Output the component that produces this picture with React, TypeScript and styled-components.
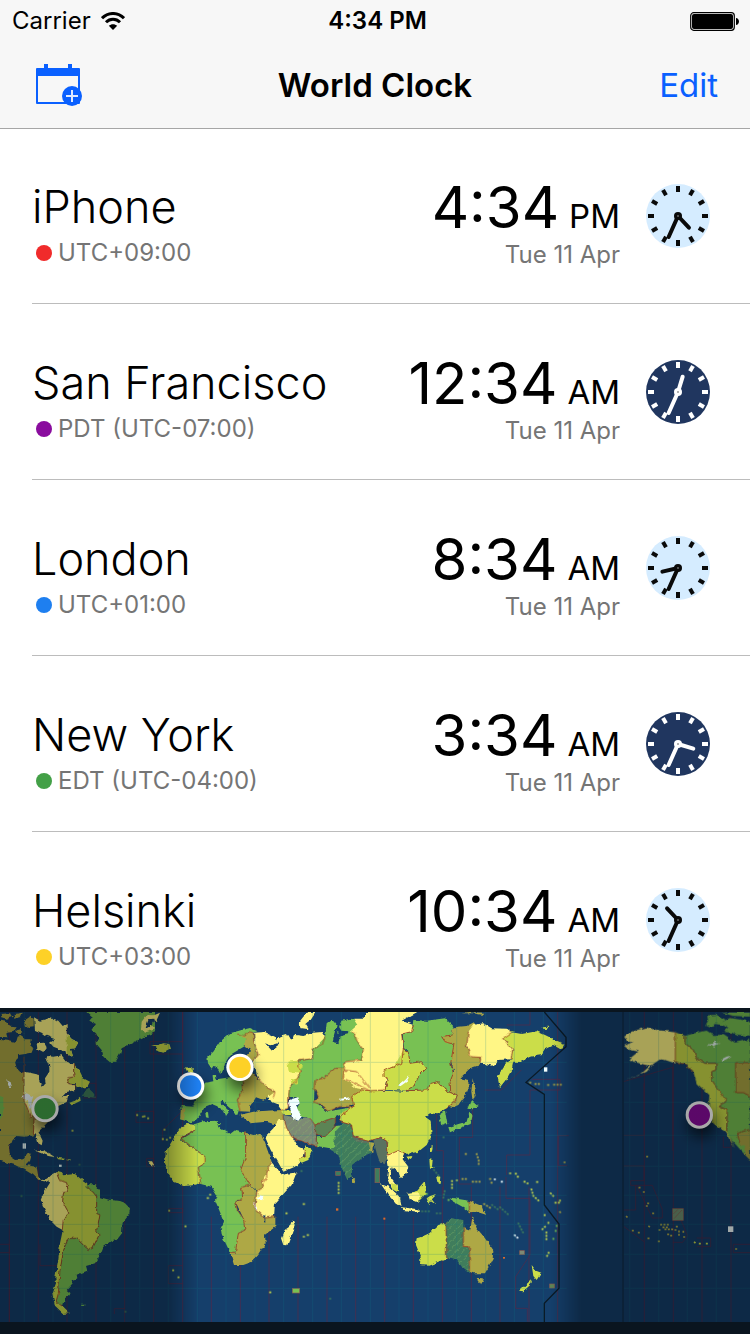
import React from "react";
import styled, { createGlobalStyle } from "styled-components";

const GlobalStyle = createGlobalStyle`
  *, *::before, *::after { box-sizing: border-box; }
  body {
    margin: 0;
    background: #fff;
    color: #000;
    font-family: Inter, "Liberation Sans", sans-serif;
    -webkit-font-smoothing: antialiased;
  }
`;

const Screen = styled.div`
  display: flex;
  flex-direction: column;
`;

const Header = styled.header`
  position: relative;
  background: #f7f7f7;
  box-shadow: 0 1px 0 #a6a6a6;
`;

const StatusBar = styled.div`
  display: grid;
  grid-template-columns: 1fr auto 1fr;
  align-items: center;
  height: 42px;
  padding: 0 11px 0 12px;
  font-size: 24px;
  line-height: 32px;
`;

const Carrier = styled.div`
  display: flex;
  align-items: center;
  gap: 10px;
`;

const StatusTime = styled.div`
  padding-left: 4px;
  font-weight: 600;
`;

const BatterySlot = styled.div`
  display: flex;
  justify-content: flex-end;
`;

const NavBar = styled.div`
  display: grid;
  grid-template-columns: 1fr auto 1fr;
  align-items: center;
  height: 86px;
  padding: 0 32px;
`;

const Title = styled.h1`
  margin: 0;
  font-size: 33px;
  line-height: 40px;
  font-weight: 600;
`;

const NavButton = styled.button<{ $end?: boolean }>`
  justify-self: ${(p) => (p.$end ? "end" : "start")};
  display: flex;
  padding: 0;
  border: 0;
  background: none;
  color: #0a60ff;
  font: inherit;
  font-size: 33px;
  line-height: 40px;
`;

const ClockList = styled.ul`
  margin: 0;
  padding: 0;
  list-style: none;
`;

const ClockRow = styled.li`
  display: flex;
  align-items: center;
  min-height: 176px;
  margin-left: 32px;
  padding-right: 40px;
  border-bottom: 1px solid #bcbcbc;
  &:last-child { border-bottom-color: transparent; }
`;

const Place = styled.div`
  flex: 1;
  padding-top: 14px;
`;

const PlaceName = styled.div`
  font-size: 45px;
  line-height: 60px;
  font-weight: 300;
`;

const Zone = styled.div`
  display: flex;
  align-items: center;
  gap: 6px;
  padding-left: 4px;
  font-size: 24px;
  line-height: 32px;
  color: #757575;
`;

const Dot = styled.span<{ $color: string }>`
  width: 16px;
  height: 16px;
  border-radius: 50%;
  background: ${(p) => p.$color};
`;

const Moment = styled.div`
  padding-top: 18px;
  margin-right: 26px;
  text-align: right;
`;

const Time = styled.div`
  display: flex;
  align-items: baseline;
  justify-content: flex-end;
  gap: 10px;
  font-size: 58px;
  line-height: 60px;
`;

const Period = styled.span`
  font-size: 33px;
  line-height: 36px;
`;

const DateText = styled.div`
  font-size: 24px;
  line-height: 36px;
  color: #757575;
`;

const MapSvg = styled.svg`
  display: block;
  width: 100%;
  height: auto;
`;

function WifiIcon() {
  return (
    <svg width="24" height="18" viewBox="0 0 24 18" fill="none" stroke="#000" strokeWidth="3" aria-hidden="true">
      <path d="M1 6.200C7.200-.1 16.800-.1 23 6.200" />
      <path d="M5 10.200c4-4 10-4 14 0" />
      <path d="M12 18l-4.200-4.200c2.400-2.200 6-2.200 8.400 0z" fill="#000" stroke="none" />
    </svg>
  );
}

function BatteryIcon() {
  return (
    <svg width="49" height="19" viewBox="0 0 49 19" aria-hidden="true">
      <rect x=".7" y=".7" width="43.600" height="17.600" rx="3" fill="none" stroke="#000" strokeWidth="1.200" />
      <rect x="2" y="2" width="41" height="15" rx="2" />
      <path d="M46 6c1.500.2 3 1.500 3 3.500S47.500 12.800 46 13z" />
    </svg>
  );
}

function CalendarAddIcon() {
  return (
    <svg width="54" height="44" viewBox="-4 0 54 44" aria-hidden="true">
      <path d="M8 1h4v4h20V1h4v4h7q1 0 1 1v34q0 1-1 1H1q-1 0-1-1V6q0-1 1-1h7zM2 13v26h40V13z" fill="#0a60ff" fillRule="evenodd" />
      <circle cx="36" cy="33" r="10" fill="#0a60ff" />
      <path d="M36 27v12M30 33h12" stroke="#dfeaff" strokeWidth="2" />
    </svg>
  );
}

function ClockFace({ hour, minute, night }: { hour: number; minute: number; night: boolean }) {
  const ink = night ? "#fff" : "#0a0a0a";
  return (
    <svg width="64" height="64" viewBox="-32 -32 64 64" aria-hidden="true">
      <circle r="32" fill={night ? "#20365f" : "#d5ecff"} />
      {Array.from({ length: 12 }, (_, i) => (
        <rect key={i} x="-2" y="-30" width="4" height="6" fill={ink} transform={`rotate(${i * 30})`} />
      ))}
      <g stroke={ink} strokeWidth="4" strokeLinecap="round">
        <path d="M0 0V-16" transform={`rotate(${hour * 30 + minute / 2})`} />
        <path d="M0 0V-23" transform={`rotate(${minute * 6})`} />
      </g>
      <circle r="4" fill={ink} />
      <circle r="1" fill={night ? "#999" : "#666"} />
    </svg>
  );
}

const C = {
  sea: "#153f6b",
  yellow: "#fff685",
  lime: "#cbdd4a",
  green: "#78c152",
  olive: "#aea845",
  teal: "#3f7d5c",
  grey: "#7d8a74",
  moss: "#5c8454",
  slate: "#5a7260",
  white: "#f4ffff",
};

type Shape = [string, string];

const americas: Shape[] = [
  [C.green, "262,36 278,50 268,62 288,72 275,90 288,100 298,120 286,128 305,150 310,170 330,187 346,185 360,160 365,145 385,135 405,125 440,108 465,97 465,36"],
  [C.yellow, "440,45 425,65 423,90 440,96 466,88 452,72 470,60 480,38 462,46"],
  [C.sea, "446,58 460,56 462,64 448,82 436,84"],
  [C.lime, "453,135 470,140 465,150 490,158 513,146 508,132 490,130 475,135"],
  [C.olive, "0,120 20,122 45,128 50,110 62,108 75,118 92,118 90,135 100,145 95,158 75,162 55,165 45,185 50,205 60,215 75,218 90,300 103,330 103,405 75,410 50,408 35,420 27,440 30,470 45,480 70,478 85,460 95,462 90,480 75,495 110,500 115,530 128,540 115,540 100,525 75,510 45,495 0,482"],
  [C.olive, "0,62 18,66 30,80 50,82 40,96 18,98 22,112 0,110"],
  [C.olive, "45,42 68,38 62,52 42,56"],
  [C.olive, "72,62 90,50 101,56 101,82 84,84 74,76"],
  [C.olive, "45,92 62,88 70,100 56,106"],
  [C.olive, "2,42 30,40 38,50 20,56 4,52"],
  [C.yellow, "72,215 90,218 120,225 118,245 128,260 137,250 135,235 148,215 148,198 138,180 142,168 160,170 185,166 196,180 205,190 220,190 222,230 203,235 205,250 225,255 225,270 200,276 185,292 206,285 200,306 170,320 150,360 130,380 115,395 128,422 125,436 115,430 108,405 100,402 103,345 90,350 72,300"],
  [C.yellow, "102,52 120,62 150,54 175,62 188,78 200,72 200,100 216,118 236,126 225,145 212,146 220,172 200,162 180,148 160,140 150,128 165,118 135,106 125,98 105,90"],
  [C.yellow, "110,130 132,128 140,142 130,156 112,146"],
  [C.lime, "200,105 216,118 236,126 225,145 212,146 220,172 200,160"],
  [C.lime, "220,190 240,215 250,235 270,245 262,260 230,265 225,250 205,248 202,235 222,230"],
  [C.teal, "248,290 262,262 280,278 288,293"],
  [C.lime, "208,308 225,302 240,290 242,302 215,316"],
  [C.white, "62,290 80,280 100,290 96,300 94,328 86,320 84,300 70,296"],
  [C.white, "18,238 28,244 34,264 26,258"],
  [C.green, "0,288 10,292 10,335 0,360"],
  [C.yellow, "105,452 125,450 150,462 166,472 145,468 120,458"],
  [C.lime, "170,470 195,473 192,480 174,478"],
  [C.lime, "200,478 212,478 212,481 200,481"],
  [C.yellow, "112,532 128,540 140,536 156,524 160,532 140,545 124,542"],
  [C.yellow, "145,532 170,518 175,535 200,548 205,575 190,578 188,605 207,640 190,655 192,692 170,680 150,660 132,625 122,600 133,575 150,548"],
  [C.lime, "170,520 180,514 190,526 225,522 240,535 262,550 260,565 278,575 290,590 290,640 300,645 290,690 297,705 280,740 265,748 250,735 230,715 205,715 190,745 187,690 190,655 207,640 188,605 190,578 205,575 200,548 178,540"],
  [C.green, "260,553 285,553 300,570 300,592 330,600 355,602 375,610 390,625 388,640 368,665 366,700 350,720 330,725 310,740 300,765 285,790 258,798 262,812 230,824 232,835 215,840 218,850 200,870 212,880 195,895 190,915 175,915 168,905 178,880 180,810 192,745 205,715 230,715 250,735 265,748 280,740 297,705 290,690 300,645 290,640 290,590 278,575 260,565"],
  [C.lime, "188,692 192,740 180,810 178,880 168,905 190,920 210,940 188,942 165,920 157,880 168,850 166,830 175,780 180,730"],
  [C.green, "243,914 258,914 254,918 244,918"],
  [C.yellow, "444,484 456,484 462,494 456,500 450,490"],
];

const eurafrica: Shape[] = [
  [C.green, "172,172 190,155 210,125 240,100 275,90 300,84 322,94 310,98 295,95 285,108 290,135 265,150 240,165 225,190 222,205 212,225 200,200 190,198 185,206 174,190"],
  [C.olive, "262,102 285,108 295,95 310,97 312,130 325,165 310,182 285,182 278,168 298,150 285,138 286,116"],
  [C.lime, "105,202 128,205 130,218 112,216"],
  [C.green, "95,318 130,320 138,300 130,286 150,275 165,248 190,244 188,225 198,225 200,238 240,232 285,222 275,255 278,270 262,300 270,320 262,345 254,334 240,322 215,300 208,306 238,334 228,348 222,332 200,318 185,312 165,320 150,345 136,362 120,368 105,362 90,358"],
  [C.olive, "92,328 106,326 102,360 92,358"],
  [C.olive, "276,222 310,222 325,240 350,262 375,275 370,292 345,300 325,296 302,315 300,335 268,334 262,300 278,270"],
  [C.yellow, "310,182 325,165 313,130 312,98 345,96 378,112 382,130 362,136 345,130 366,152 385,138 380,120 392,112 415,105 425,122 432,104 460,108 490,98 515,96 525,112 518,130 490,148 487,176 445,182 443,200 455,210 440,240 418,262 415,325 395,332 382,312 345,298 375,275 350,262 325,240"],
  [C.yellow, "496,36 480,60 466,72 476,88 452,84 443,72 460,50 475,36"],
  [C.yellow, "395,106 408,102 412,110 400,114"],
  [C.green, "525,112 530,70 545,58 560,75 552,105 548,125 566,130 562,95 574,62 600,56 640,60 650,180 585,205 555,205 520,235 495,240 492,300 530,335 605,322 600,335 570,345 555,352 495,375 470,352 452,350 440,325 450,310 440,292 415,290 418,262 440,240 455,210 443,200 445,182 487,176 490,148"],
  [C.lime, "412,185 440,182 455,195 452,222 416,216"],
  [C.lime, "422,240 446,234 440,250 424,252"],
  [C.olive, "495,240 520,235 555,205 590,205 660,270 600,320 565,320 535,335 510,312 490,306 505,290 492,265"],
  [C.lime, "568,345 605,322 612,345 600,370 575,365"],
  [C.olive, "268,345 310,335 345,332 395,330 402,358 380,375 350,365 300,370 282,355"],
  [C.lime, "392,330 425,332 424,345 400,346"],
  [C.sea, "302,318 318,292 340,300 350,292 362,298 352,306 384,326 340,332 310,326"],
  [C.yellow, "345,410 370,385 386,360 402,360 412,385 445,440 466,450 460,475 435,500 400,515 385,488 362,450"],
  [C.lime, "445,480 466,470 465,436 488,452 475,480 455,488"],
  [C.grey, "398,345 425,350 440,362 465,352 480,355 495,375 500,438 470,430 445,420 425,410 410,385"],
  [C.white, "422,298 445,292 450,310 438,318 455,350 445,362 430,356 425,338 414,310"],
  [C.moss, "495,375 530,358 557,352 555,378 525,410 498,402"],
  [C.green, "500,412 525,410 557,378 580,375 575,400 560,430 550,446 500,438"],
  [C.lime, "95,380 110,372 135,374 135,390 95,410 92,420 165,470 165,490 145,502 152,550 130,556 100,558 72,545 50,512 45,490 47,455 75,408"],
  [C.green, "135,372 160,364 200,362 205,382 240,402 256,390 287,398 287,470 272,510 300,555 275,562 278,595 257,605 262,630 280,655 285,690 265,700 256,755 240,757 215,705 212,685 222,665 195,600 200,585 185,560 152,552 145,502 165,490 165,470 92,418 135,390"],
  [C.olive, "287,398 310,405 332,402 345,430 365,485 350,520 350,540 336,540 340,562 325,575 300,555 272,510 287,470"],
  [C.yellow, "362,484 380,505 396,524 440,517 425,555 375,610 372,650 345,654 330,640 314,625 320,575 340,562 336,540 350,520"],
  [C.olive, "275,562 300,555 320,575 314,625 345,654 376,650 376,680 345,704 347,730 325,765 305,786 280,795 252,795 240,757 256,757 265,700 285,690 280,655 258,608 278,595"],
  [C.white, "328,586 340,588 336,602 324,598"],
  [C.white, "312,608 320,618 322,634 314,626"],
  [C.sea, "340,642 346,644 346,668 341,666"],
  [C.yellow, "428,658 434,675 425,702 412,736 400,735 393,715 404,690 418,680"],
  [C.sea, "280,150 300,140 306,150 282,178 270,172"],
  [C.green, "204,372 212,372 212,376 204,376"],
  [C.green, "166,338 174,336 176,354 168,352"],
];

const asiaPacific: Shape[] = [
  [C.yellow, "105,36 262,36 215,62 250,75 245,95 215,102 220,145 215,190 175,210 172,240 165,270 120,272 80,265 40,235 42,210 45,185 80,180 95,180 100,150 80,120 75,100 60,95 82,75 70,56 105,56"],
  [C.lime, "65,290 95,270 120,270 225,275 295,268 300,250 325,245 345,270 382,285 375,305 350,325 318,342 300,340 285,350 302,362 305,405 290,435 265,455 232,462 205,452 175,465 170,420 155,412 120,422 70,410 65,375 30,365 35,345 72,318"],
  [C.lime, "162,212 195,195 220,150 235,158 240,190 275,185 290,205 265,230 255,255 228,272 165,270 175,238 160,230"],
  [C.green, "250,60 290,62 345,55 370,78 365,105 335,110 345,125 372,132 362,190 370,220 360,245 362,280 345,270 325,245 300,250 295,270 230,272 255,255 260,235 290,205 275,185 240,190 235,155 222,145 218,102 245,95"],
  [C.olive, "370,82 410,78 435,65 430,90 415,95 410,140 425,170 452,172 450,195 420,205 390,235 415,240 416,270 385,315 370,322 358,318 382,285 362,275 360,245 372,215 362,180 372,132 345,128 335,108 365,105"],
  [C.olive, "428,235 433,262 437,290 428,302 424,275"],
  [C.yellow, "415,95 430,75 460,70 485,85 530,86 545,97 542,112 518,115 548,148 543,178 505,180 490,197 450,190 452,172 422,170 410,135"],
  [C.lime, "518,115 545,97 575,102 620,94 645,105 680,122 705,132 695,150 670,135 640,150 638,165 600,170 572,186 550,185 545,210 530,236 510,262 503,230 520,200 543,178 548,148"],
  [C.lime, "638,82 655,80 652,86 640,87"],
  [C.green, "355,382 385,372 410,365 418,335 428,345 422,372 390,384 360,397"],
  [C.green, "415,326 425,302 443,318 428,328"],
  [C.green, "325,346 345,332 352,372 336,378"],
  [C.teal, "0,448 12,445 15,395 40,368 65,375 70,412 115,430 125,458 100,468 66,495 66,525 52,540 38,510 25,465"],
  [C.slate, "68,404 90,416 118,420 118,430 92,428 68,414"],
  [C.olive, "113,425 132,428 130,456 118,452"],
  [C.slate, "130,420 155,410 175,428 172,460 165,492 150,488 140,460"],
  [C.olive, "66,530 76,540 74,550 66,548"],
  [C.yellow, "170,465 210,450 222,460 218,478 235,500 230,520 212,535 205,515 185,502 180,528 200,555 204,577 185,560 172,530 176,500"],
  [C.lime, "183,546 198,552 204,577 190,570"],
  [C.lime, "300,440 308,438 306,455 300,455"],
  [C.lime, "232,470 244,468 240,480 234,478"],
  [C.yellow, "153,553 175,560 210,595 215,617 198,612 175,585"],
  [C.yellow, "215,622 265,628 266,636 220,630"],
  [C.lime, "235,580 262,572 284,546 290,578 270,600 255,605"],
  [C.yellow, "232,578 265,577 271,590 262,605 240,600"],
  [C.lime, "298,478 308,480 306,500 312,504 300,506"],
  [C.lime, "318,528 334,530 332,552 322,545"],
  [C.lime, "290,595 300,588 318,582 304,596 316,612 302,604 298,616"],
  [C.green, "360,592 390,598 418,602 418,637 400,622 370,605"],
  [C.olive, "418,602 455,618 460,632 470,645 440,635 418,637"],
  [C.lime, "260,715 275,710 298,700 325,675 348,668 350,775 325,785 295,797 270,795 272,770 258,735"],
  [C.teal, "348,668 365,655 400,660 400,740 418,742 418,820 400,806 380,780 350,775"],
  [C.olive, "400,685 420,692 428,648 440,685 460,708 490,750 488,780 465,820 430,820 418,815 418,740 400,740"],
  [C.olive, "440,837 462,838 452,855"],
  [C.lime, "605,795 618,812 634,818 620,840 610,828"],
  [C.lime, "606,838 604,852 580,874 567,872"],
  [C.white, "238,226 232,244 212,258 204,258 226,240"],
  [C.white, "30,296 60,292 58,298 34,302"],
  [C.olive, "395,40 420,36 460,38 455,44 430,40"],
  [C.sea, "18,65 34,92 55,94 54,100 30,106 26,128 18,112 26,100"],
];

const westAmerica: Shape[] = [
  [C.yellow, "223,110 240,98 262,90 290,82 320,90 376,97 376,190 345,180 330,178 310,192 290,215 225,243 270,225 300,198 275,192 250,185 240,175 265,155 235,148 223,138 250,125 230,122"],
  [C.lime, "376,97 405,108 405,130 430,150 440,175 465,190 498,190 498,210 485,215 485,240 520,285 528,300 508,320 532,330 530,390 555,445 525,395 490,370 475,340 478,285 440,250 430,215 405,192 376,186"],
  [C.green, "405,108 440,98 470,92 490,105 520,105 555,128 600,118 600,480 585,465 545,420 530,395 532,330 508,320 528,300 485,240 485,215 498,210 498,190 465,190 440,175 430,150 405,130"],
  [C.olive, "557,188 600,188 600,288 580,278 557,278"],
  [C.olive, "562,400 590,396 600,388 600,480 582,460 585,440 570,432"],
  [C.green, "472,46 500,45 526,58 510,74 494,72 486,84 466,78 474,62"],
  [C.green, "505,72 540,54 590,62 600,70 600,108 560,104 545,98 520,96 535,82"],
  [C.green, "515,38 600,38 600,50 550,48"],
  [C.white, "470,134 490,132 490,124 500,130 512,130 496,136 494,144 486,138"],
  [C.white, "514,178 530,170 545,166 532,176 520,182"],
];

const borders: [number, string][] = [
  [0, "72,170 72,300 92,350 103,345 100,405"],
  [0, "220,190 222,230 203,235 205,250 225,255 225,270"],
  [0, "170,520 178,540 200,548 205,575 190,578 188,605 207,640 190,655 187,690"],
  [0, "260,560 278,575 290,590 290,640 300,645 290,690 297,705 280,740 265,748 250,735 230,715 205,715 192,745 180,810 175,880 168,905 190,920"],
  [450, "262,102 285,108 295,95 310,97 312,130 325,165 310,182"],
  [450, "276,222 278,270 262,300 270,334"],
  [450, "310,222 350,262 375,275 370,292"],
  [450, "525,112 518,130 490,148 487,176 445,182 443,200 455,210 440,240 418,262 415,325 392,330"],
  [450, "495,240 520,235 555,205 580,205"],
  [450, "495,240 492,265 505,290 490,306 510,312 535,335 565,320 605,320"],
  [450, "398,345 410,385 425,410 445,420 500,438 495,375 480,355"],
  [450, "495,375 555,352 557,378 525,410 498,402"],
  [450, "135,390 92,415 165,470 165,490 145,502 152,552"],
  [450, "287,398 287,470 272,510 300,555 275,562 278,595 257,605 262,630 280,655 285,690 265,700 256,757 240,757"],
  [450, "362,484 350,520 350,540 336,540 340,562 320,575 314,625 345,654 376,650"],
  [450, "446,478 466,470 465,450"],
  [990, "65,95 75,100 80,120 100,150 95,180 45,185 40,235 120,272 165,270"],
  [990, "250,75 245,95 215,102 220,145 215,190 162,212 162,230 175,238 165,270"],
  [990, "40,210 80,215 120,265"],
  [990, "220,150 235,158 240,190 275,185 290,205 265,230 255,255 228,272 295,270 300,250 325,245 345,270 382,285 375,305 350,325"],
  [990, "365,105 335,110 345,125 372,132 362,190 370,220 360,245 362,275"],
  [990, "415,95 410,140 425,170 452,172 450,190"],
  [990, "545,97 518,115 548,148 543,178"],
  [990, "120,272 95,270 65,290 72,318 35,345 30,365 65,375 70,410 120,422 155,412 170,420 175,465 205,452 225,460"],
  [990, "348,668 350,775"],
  [990, "400,685 400,740 418,740 418,815"],
  [990, "418,602 418,637"],
  [1650, "376,97 376,186 405,192 430,215"],
  [1650, "405,108 405,130 430,150 440,175 465,190 498,190 498,210 485,215 485,240 528,300 508,320 532,330 530,395"],
  [1650, "600,188 557,188 557,278 580,278 600,288"],
  [1650, "600,388 562,400 570,432"],
];

const islets: [number, string, string][] = [
  [0, C.lime, "M411 345h3M428 350h4M433 349h3M444 355h4M217 392h4M493 389h4M488 417h4M500 419h4M510 413h3M507 632h4M556 679h4M519 811h3M535 832h4"],
  [0, C.teal, "M64 588h4M376 935h6M238 494h3"],
  [450, C.lime, "M180 584h4M173 594h3M461 612h4M409 640h4M461 710h4M473 705h4M566 548v36M360 877h4"],
  [450, C.teal, "M540 896h10M454 513h4"],
  [990, C.lime, "M540 520h4M557 521h6M563 530h5M583 545h5M592 550h4M621 546h8M604 568l6 20 16 14M662 580l8 8M676 608h18M690 601v10M644 645v3M655 668v4M645 680l-12 12M649 697v28M656 758l-8 16M366 543v30M380 541h4"],
  [990, C.olive, "M407 462h4M440 462l6 18v20M397 537h20M428 545h30M480 537h4M484 548h4M600 248h8M616 252h20M654 255h4M672 254h30M703 487h3M690 636l4 6M462 612l20 12"],
  [990, C.teal, "M486 615l20 15M510 622l30 26M565 670l14 28M312 510l16 20M344 573l-4 20M276 634h30M340 412h3M320 640h16"],
  [990, C.green, "M680 677v4M677 692v4M670 716v4M355 600h10M290 582h6"],
  [990, C.white, "M494 538h4M515 545h4M554 706l12 10"],
  [1650, C.olive, "M268 563h4M281 576h4M294 610h4M290 618h3M309 640h3M230 650l6 6M248 692h4M266 698h4M297 679l6 5M295 715h4M326 724h4M328 690h8M333 674h24M340 682h18M346 688h26M354 703h4M363 707h4M376 690h8M380 680h4M387 694v20M400 695v6M402 711h6M558 747h4M291 470h5"],
  [1650, C.lime, "M434 727l6 6M449 731h4M470 731h4"],
];

function Shapes({ items }: { items: Shape[] }) {
  return (
    <>
      {items.map(([fill, points], i) => (
        <polygon key={i} points={points} fill={fill} />
      ))}
    </>
  );
}

const pins: [number, number, string][] = [
  [135, 326, "#43a047"],
  [572, 258, "#1e7ff0"],
  [720, 202, "#fdd127"],
  [2098, 345, "#8a0c9e"],
];

const parallels = [187, 307, 406, 499, 586, 673, 763, 865];
const meridians = Array.from({ length: 26 }, (_, i) => Math.round(-14 + i * 86.5));
const zoneLines = Array.from({ length: 26 }, (_, i) => Math.round(28 + i * 86.6));

function WorldMap() {
  return (
    <MapSvg viewBox="0 24 2250 978" role="img" aria-label="World time zones">
      <defs>
        <filter id="coast" x="0" y="0" width="2250" height="1002" filterUnits="userSpaceOnUse">
          <feTurbulence type="fractalNoise" baseFrequency="0.07" numOctaves="2" seed="4" result="n" />
          <feDisplacementMap in="SourceGraphic" in2="n" scale="11" xChannelSelector="R" yChannelSelector="G" />
        </filter>
        <filter id="pinShadow" x="-100%" y="-100%" width="300%" height="300%">
          <feGaussianBlur stdDeviation="20" />
        </filter>
        <pattern id="hatch" width="16" height="16" patternUnits="userSpaceOnUse" patternTransform="rotate(45)">
          <path d="M0 0V16" stroke="#8fc06a" strokeWidth="4" />
        </pattern>
        <linearGradient id="night" gradientUnits="userSpaceOnUse" x1="0" x2="2250" y1="0" y2="0">
          <stop offset="0" stopOpacity=".34" />
          <stop offset=".225" stopOpacity=".34" />
          <stop offset=".265" stopOpacity="0" />
          <stop offset=".735" stopOpacity="0" />
          <stop offset=".775" stopOpacity=".34" />
          <stop offset="1" stopOpacity=".34" />
        </linearGradient>
        <clipPath id="mapArea">
          <rect x="0" y="36" width="2250" height="930" />
        </clipPath>
      </defs>
      <rect y="24" width="2250" height="978" fill="#0a151f" />
      <g clipPath="url(#mapArea)">
        <rect y="36" width="2250" height="930" fill={C.sea} />
        <g fill="none" stroke="#7c1d35" strokeWidth="2" opacity=".65">
          {zoneLines.filter((x) => x < 1700 || x > 1880).map((x) => {
            const top = x > 550 && x < 1600 ? (x > 1300 ? 560 : 650) : 36;
            return <path key={x} d={`M${x} ${top}V966`} />;
          })}
          <path d="M0 733h28v233M0 758h28M120 733v64h83M450 125h98v-90M450 125v37h98v170M408 334h53v33h-53zM548 332l-60 58v34M505 626h43v12h-43zM548 797h-43v54h43M343 942v-16h32M440 475h21v25h-21zM248 250h40v44h-40" />
          <path d="M1855 480M1418 327V412h-40v140h38M1310 342v110h20v130M1454 270l50 0 60-60M1520 525v-60h70V270h90v-32h-84M1582 965v-40h-35V830l43-65V595h-72v-64M1676 407h30M1676 407v90h26M1356 300v-80M1520 75h70V36" />
          <path d="M1870 245l148-43v250M1932 250v156h-62M1870 498h62v44h-40v14h65l30 72v26h-30l-47-98M1907 556v74h-37M1872 680l60 45M2018 727h30l14-20-20-50M2090 714h42v26h-42M2250 733h-50v25h50M2170 410v32h22" />
        </g>
        <g filter="url(#coast)">
          <Shapes items={americas} />
          <g transform="translate(450 0)">
            <Shapes items={eurafrica} />
          </g>
          <g transform="translate(990 0)">
            <Shapes items={asiaPacific} />
            <g fill="url(#hatch)" opacity=".4">
              <polygon points="0,448 12,445 15,395 40,368 65,375 70,412 115,430 125,458 100,468 66,495 66,525 52,540 38,510 25,465" />
              <polygon points="348,668 365,655 400,660 400,740 418,742 418,820 400,806 380,780 350,775" />
              <polygon points="-142,345 -115,350 -75,352 -45,375 -40,438 -95,420 -130,385" />
            </g>
          </g>
          <g transform="translate(1650 0)">
            <Shapes items={westAmerica} />
          </g>
          <g fill="none" stroke="#a03c20" strokeWidth="3" opacity=".8">
            {borders.map(([dx, points], i) => (
              <polyline key={i} points={points} transform={`translate(${dx} 0)`} />
            ))}
          </g>
        </g>
        <g fill="none" strokeWidth="5">
          {islets.map(([dx, stroke, d], i) => (
            <path key={i} d={d} stroke={stroke} strokeDasharray="1 9" strokeLinecap="square" transform={`translate(${dx} 0)`} />
          ))}
        </g>
        <g stroke="#8a5a50" strokeWidth="2">
          <rect x="1125" y="505" width="14" height="43" fill={C.teal} />
          <rect x="1007" y="514" width="14" height="12" fill={C.teal} />
          <rect x="1559" y="752" width="14" height="12" fill={C.grey} />
          <rect x="1649" y="852" width="14" height="12" fill={C.moss} />
          <rect x="877" y="865" width="22" height="14" fill={C.green} />
          <rect x="2018" y="626" width="32" height="35" fill="#6f8f70" />
          <path d="M2022 656l24-26M2020 642l14-14" />
        </g>
        <g fill={C.white}>
          <rect x="68" y="430" width="10" height="16" />
          <rect x="177" y="494" width="8" height="7" />
          <rect x="1632" y="202" width="10" height="13" />
          <rect x="2184" y="679" width="16" height="17" />
        </g>
        <g fill="#d86a2c">
          <rect x="1008" y="625" width="7" height="7" />
          <rect x="1150" y="653" width="6" height="6" />
          <rect x="1509" y="771" width="6" height="5" />
        </g>
        <g fill="none" stroke="#0f7f8c" strokeWidth="3" opacity=".2">
          {parallels.map((y) => (
            <path key={y} d={`M0 ${y}H1700M1869 ${y}H2250`} />
          ))}
          {meridians.filter((x) => x < 1700 || x > 1880).map((x) => (
            <path key={x} d={`M${x} 36V966`} />
          ))}
        </g>
        <path d="M1633 36l65 76v28l-120 107 55 36v332l44 57v193l-44 45v56" fill="none" stroke="#0a1a26" strokeWidth="4" />
        <path d="M1869 36V966" stroke="#10304f" strokeWidth="5" />
        {pins.map(([x, y, color]) => (
          <g key={color}>
            <circle cx={x + 6} cy={y + 26} r="42" opacity=".6" filter="url(#pinShadow)" />
            <circle cx={x} cy={y} r="41" fill="#fff" />
            <circle cx={x} cy={y} r="32" fill={color} />
          </g>
        ))}
        <rect y="36" width="2250" height="930" fill="url(#night)" />
      </g>
    </MapSvg>
  );
}

const cities = [
  { name: "iPhone", zone: "UTC+09:00", color: "#f02b2b", hour: 4, period: "PM", night: false },
  { name: "San Francisco", zone: "PDT (UTC-07:00)", color: "#8a0c9e", hour: 12, period: "AM", night: true },
  { name: "London", zone: "UTC+01:00", color: "#1e7ff0", hour: 8, period: "AM", night: false },
  { name: "New York", zone: "EDT (UTC-04:00)", color: "#43a047", hour: 3, period: "AM", night: true },
  { name: "Helsinki", zone: "UTC+03:00", color: "#fdd127", hour: 10, period: "AM", night: false },
];

export default function App() {
  return (
    <Screen>
      <GlobalStyle />
      <Header>
        <StatusBar>
          <Carrier>
            Carrier
            <WifiIcon />
          </Carrier>
          <StatusTime>4:34 PM</StatusTime>
          <BatterySlot>
            <BatteryIcon />
          </BatterySlot>
        </StatusBar>
        <NavBar>
          <NavButton type="button" aria-label="Add to calendar">
            <CalendarAddIcon />
          </NavButton>
          <Title>World Clock</Title>
          <NavButton type="button" $end>
            Edit
          </NavButton>
        </NavBar>
      </Header>
      <ClockList>
        {cities.map((c) => (
          <ClockRow key={c.name}>
            <Place>
              <PlaceName>{c.name}</PlaceName>
              <Zone>
                <Dot $color={c.color} />
                {c.zone}
              </Zone>
            </Place>
            <Moment>
              <Time>
                {c.hour}:34
                <Period>{c.period}</Period>
              </Time>
              <DateText>Tue 11 Apr</DateText>
            </Moment>
            <ClockFace hour={c.hour} minute={34} night={c.night} />
          </ClockRow>
        ))}
      </ClockList>
      <WorldMap />
    </Screen>
  );
}
